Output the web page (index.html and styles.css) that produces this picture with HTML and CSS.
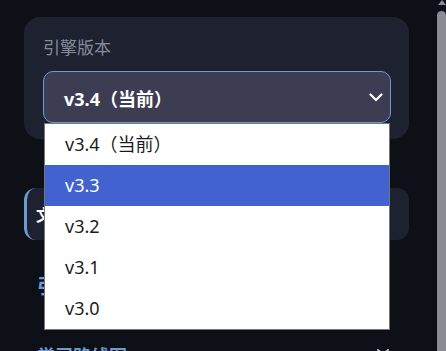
FILE: index.html
```html
<!DOCTYPE html>
<html lang="zh-CN">
<head>
<meta charset="utf-8">
<title>引擎版本</title>
<link rel="stylesheet" href="styles.css">
</head>
<body>
<div class="page">
  <section class="card">
    <div class="label">引擎版本</div>
    <div class="select-wrap">
      <div class="select">
        <span class="select-text">v3.4（当前）</span>
        <svg class="chevron" width="14" height="9" viewBox="0 0 14 9"><path d="M1.5 1.5 L7 7 L12.5 1.5" fill="none" stroke="#ffffff" stroke-width="2.2" stroke-linecap="round" stroke-linejoin="round"/></svg>
      </div>
      <ul class="options">
        <li class="option">v3.4（当前）</li>
        <li class="option selected">v3.3</li>
        <li class="option">v3.2</li>
        <li class="option">v3.1</li>
        <li class="option">v3.0</li>
      </ul>
    </div>
  </section>
  <section class="card tab-card">
    <span class="tab-text">文档</span>
  </section>
  <h2 class="heading">引擎说明</h2>
  <div class="row">
    <span class="row-title">学习路线图</span>
    <svg class="close" width="14" height="14" viewBox="0 0 14 14"><path d="M2 2 L12 12 M12 2 L2 12" fill="none" stroke="#b8bccb" stroke-width="2" stroke-linecap="round"/></svg>
  </div>
</div>
<div class="scrollbar">
  <div class="arrow"></div>
  <div class="thumb"></div>
</div>
</body>
</html>
```
FILE: styles.css
```css
html, body {
  margin: 0;
  padding: 0;
  background: #0d1017;
  height: 100%;
  overflow: hidden;
}
body {
  font-family: "Noto Sans", "Noto Sans CJK SC", sans-serif;
  color: #ffffff;
}
.page {
  width: 385px;
  padding: 17px 0 0 24px;
  display: flex;
  flex-direction: column;
}
.card {
  background: #1e2230;
  border-radius: 16px;
  padding: 20px 18px 16px 19px;
}
.label {
  font-family: "Noto Sans CJK SC", sans-serif;
  font-size: 17px;
  line-height: 20px;
  color: #858a9b;
  height: 20px;
  margin-bottom: 14px;
}
.select-wrap {
  position: relative;
}
.select {
  height: 50px;
  border: 1px solid #6b9bd1;
  border-radius: 10px;
  background: #3c3d53;
  display: flex;
  align-items: center;
  justify-content: space-between;
  padding: 0 6px 0 20px;
}
.select-text {
  font-family: "Noto Sans", "Noto Sans CJK SC", sans-serif;
  font-weight: 700;
  font-size: 18px;
  color: #ffffff;
  padding-top: 2px;
}
.chevron {
  display: block;
  margin-right: 1px;
}
.options {
  position: absolute;
  left: 1px;
  right: 1px;
  top: 52px;
  margin: 0;
  padding: 0;
  list-style: none;
  background: #ffffff;
  border: 1px solid #767676;
  z-index: 10;
}
.option {
  height: 41px;
  line-height: 41px;
  padding-left: 20px;
  font-family: "Noto Sans", "Noto Sans CJK SC", sans-serif;
  font-size: 18px;
  color: #1b1b1b;
}
.option.selected {
  background: #4263cf;
  color: #ffffff;
}
.tab-card {
  margin-top: 49px;
  height: 52px;
  padding: 0;
  border-radius: 12px;
  border-left: 3px solid #6b9bd1;
  display: flex;
  align-items: center;
  padding-left: 9px;
  box-sizing: border-box;
}
.tab-text {
  font-family: "Noto Sans CJK SC", sans-serif;
  font-weight: 700;
  font-size: 16px;
  color: #ffffff;
}
.heading {
  margin: 33px 0 0 13px;
  font-family: "Noto Sans CJK SC", sans-serif;
  font-weight: 700;
  font-size: 20px;
  line-height: 26px;
  color: #6b9bd1;
}
.row {
  margin: 44px 19px 0 13px;
  display: flex;
  justify-content: space-between;
  align-items: center;
}
.row-title {
  font-family: "Noto Sans CJK SC", sans-serif;
  font-weight: 700;
  font-size: 18px;
  line-height: 24px;
  color: #6b9bd1;
}
.scrollbar {
  position: fixed;
  top: 0;
  right: 0;
  width: 9px;
  height: 100%;
}
.arrow {
  position: absolute;
  top: 0;
  left: 1px;
  width: 0;
  height: 0;
  border-left: 4px solid transparent;
  border-right: 4px solid transparent;
  border-bottom: 5px solid #8b8d96;
}
.thumb {
  position: absolute;
  top: 11px;
  left: 0;
  right: 0;
  bottom: -10px;
  background: #8b8d96;
  border-radius: 5px;
}
```
